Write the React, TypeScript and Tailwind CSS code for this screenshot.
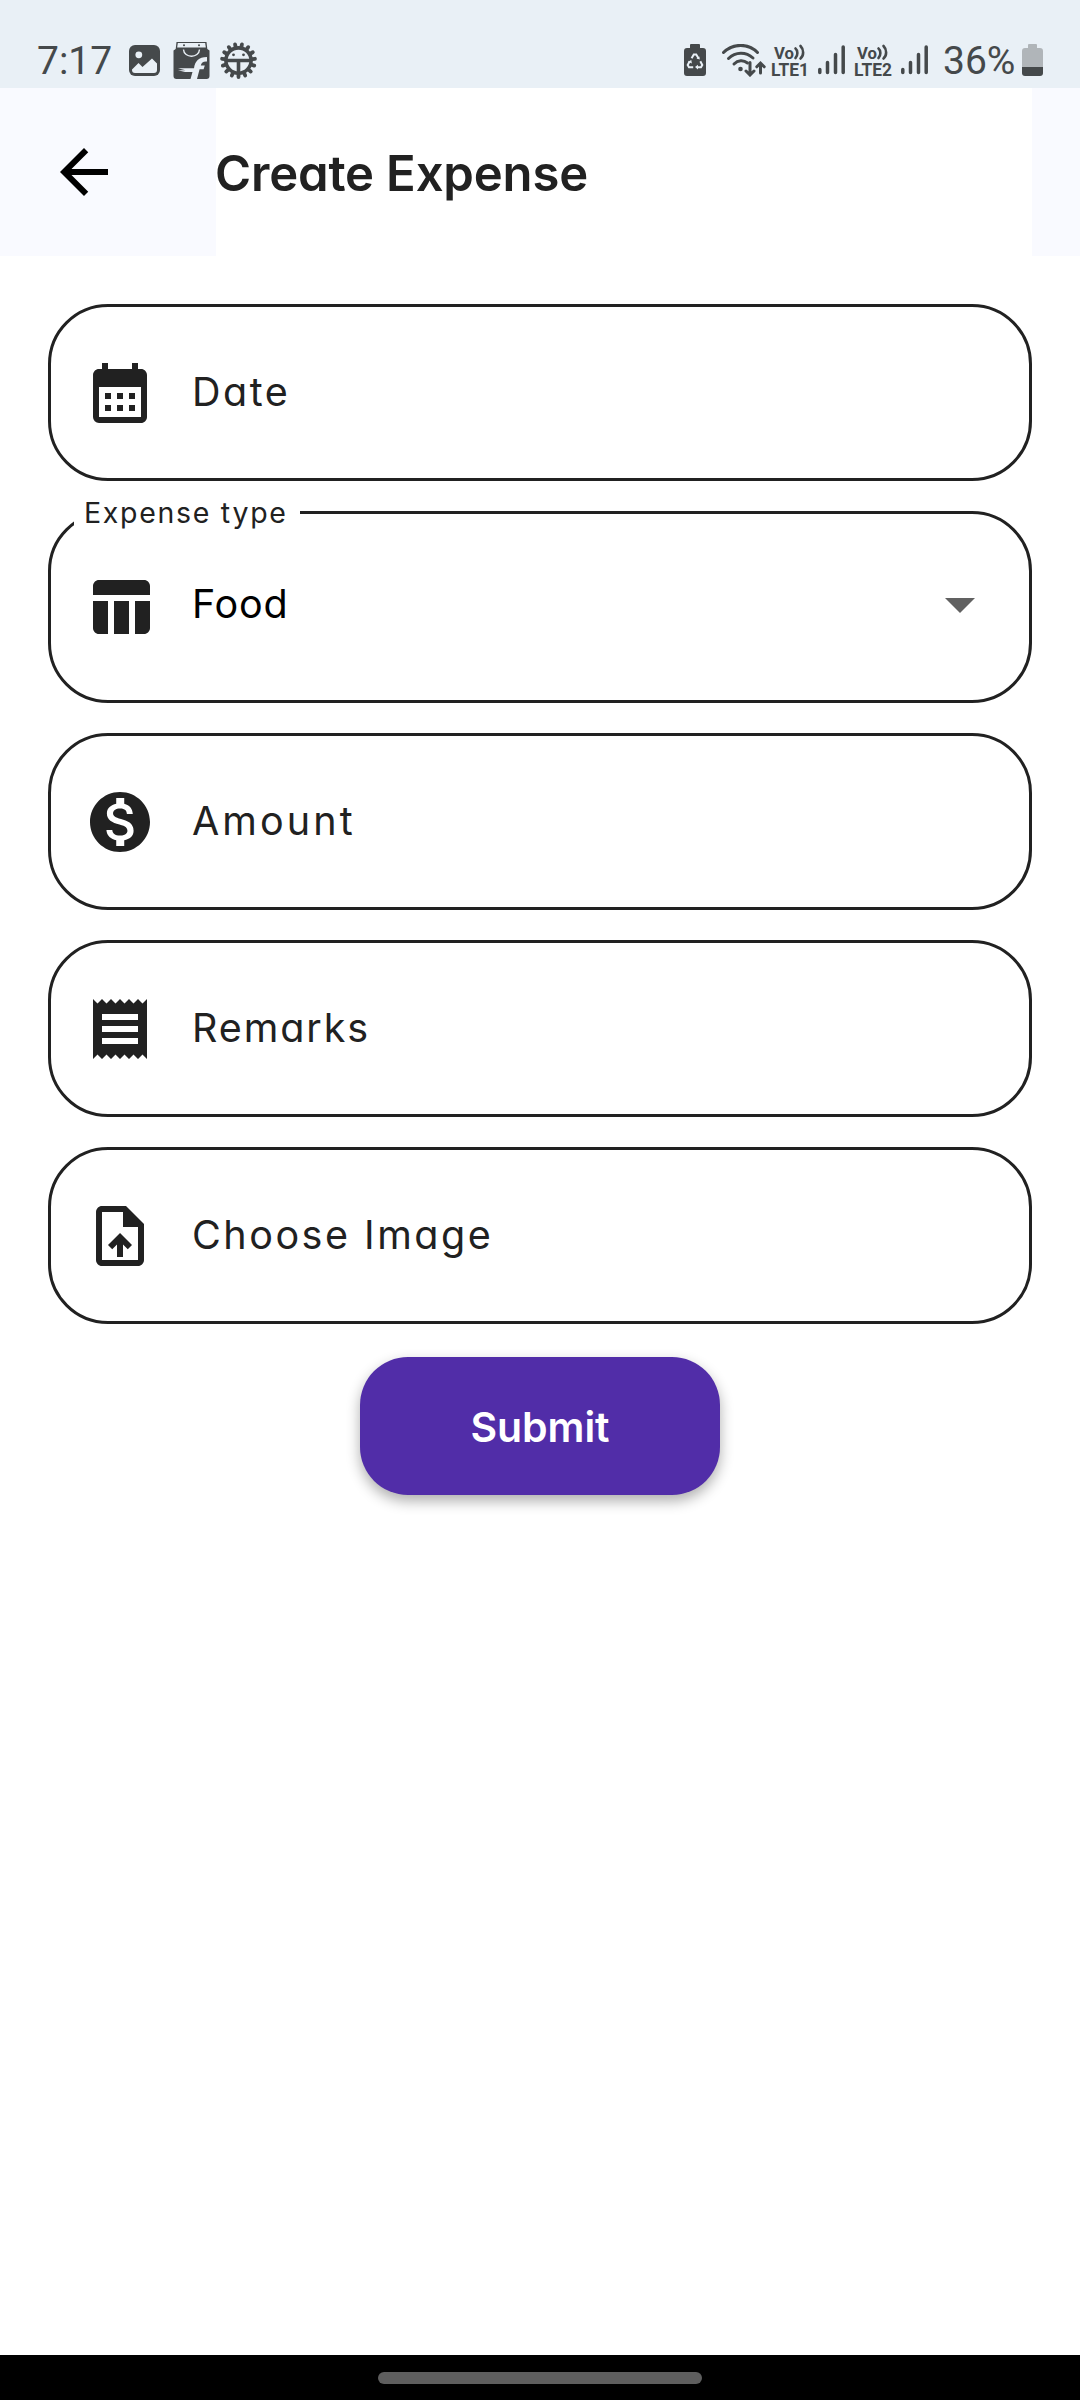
import React from 'react'
import {
    MdArrowBack,
    MdArrowDropDown,
    MdCalendarMonth,
    MdMonetizationOn,
    MdReceipt,
    MdTableChart,
    MdUploadFile,
} from 'react-icons/md'

function ImageIcon() {
    return (
        <svg className="ml-[19px]" width="31" height="31" viewBox="0 0 31 31">
            <rect width="31" height="31" rx="6" fill="#45494b"/>
            <circle cx="9.8" cy="9.8" r="3.4" fill="#e9f0f6"/>
            <path d="M3 24.5L9.5 18l4 4L23 13.5l5 5V25a3 3 0 0 1-3 3H6a3 3 0 0 1-3-3z" fill="#e9f0f6"/>
        </svg>
    )
}

function ShopIcon() {
    return (
        <svg className="ml-[13px]" width="37" height="37" viewBox="0 0 37 37">
            <path d="M3.5 0h30l.8 7 2.2 1.5V34a3 3 0 0 1-3 3h-30a3 3 0 0 1-3-3V8.5L2.7 7z" fill="#45494b"/>
            <path d="M4.8 1h27.4l.6 4.5H4.2z" fill="#e9f0f6"/>
            <circle cx="11" cy="3.2" r="1" fill="#45494b"/>
            <circle cx="26" cy="3.2" r="1" fill="#45494b"/>
            <path d="M10.5 7.5c.5 9 15.5 9 16 0" fill="none" stroke="#e9f0f6" strokeWidth="1.4"/>
            <path
                d="M17.5 37l2-7H12l-7-1.8h7.5L5 26.3h16c1-7 4.5-11.3 13-11.3v4.5c-4-.3-5.5 1.3-6.2 4h4l-1.2 3.8h-4L24 37z"
                fill="#e9f0f6"/>
        </svg>
    )
}

const teeth = [0, 24, 48, 72, 96, 120, 144, 168, 192, 216, 240, 264, 288, 312, 336]

function GearIcon() {
    return (
        <svg className="ml-[10px]" width="37" height="37" viewBox="0 0 37 37">
            {teeth.map((deg) => (
                <path key={deg} d="M18.5 2v5" stroke="#45494b" strokeWidth="3.8" strokeLinecap="round"
                      transform={`rotate(${deg + 12} 18.5 18.5)`}/>
            ))}
            <circle cx="18.5" cy="18.5" r="12.6" fill="#e9f0f6" stroke="#45494b" strokeWidth="3.6"/>
            <path d="M6 18.5h25M18.5 18.5v13" stroke="#45494b" strokeWidth="3.6"/>
            <circle cx="13.5" cy="12.8" r="1.4" fill="#45494b"/>
            <circle cx="23.5" cy="12.8" r="1.4" fill="#45494b"/>
        </svg>
    )
}

function RecycleBattery() {
    return (
        <svg width="22" height="32" viewBox="0 0 22 32">
            <path d="M7 0h8a1 1 0 0 1 1 1v3h3a3 3 0 0 1 3 3v22a3 3 0 0 1-3 3H3a3 3 0 0 1-3-3V7a3 3 0 0 1 3-3h3V1a1 1 0 0 1 1-1z"
                  fill="#45494b"/>
            <g fill="none" stroke="#e9f0f6" strokeWidth="2">
                <path d="M7.6 14.2l2.2-3.7h2.4l2.3 3.7"/>
                <path d="M16.3 17.2l2 3.8-1.3 2.2h-4.2"/>
                <path d="M9.2 23.2H5L3.7 21l2-3.8"/>
            </g>
            <path d="M15.8 15.5l-3.3-1 2.8-2zM14 20.8v4.6l-3-2.3zM4 17.8l3.3-1.8.6 3.4z" fill="#e9f0f6"/>
        </svg>
    )
}

function WifiIcon() {
    return (
        <svg className="ml-[16px]" width="44" height="33" viewBox="0 0 44 33">
            <g fill="none" stroke="#45494b" strokeWidth="3" strokeLinecap="round">
                <path d="M1.5 8.5C11-1 26.5-1 35.5 8.5"/>
                <path d="M6.5 14.5c7-7 17.5-7 24.500-.5"/>
                <path d="M12 20c4-4 9.5-4.2 13.5-1"/>
                <path d="M28 18.5v12M24 27l4 4 4-4M38.5 29v-9.5M34.8 22.8l3.7-3.7 3.7 3.7"/>
            </g>
            <circle cx="18.5" cy="25" r="2.3" fill="#45494b"/>
        </svg>
    )
}

function VolteIcon({sim}: { sim: string }) {
    return (
        <svg width="41" height="41" viewBox="0 -4 41 41" fill="#45494b" className="font-['Roboto',sans-serif] font-bold">
            <text x="4" y="14.5" fontSize="17" textLength="20" lengthAdjust="spacingAndGlyphs">Vo</text>
            <path d="M25.5 4.5c2.5 2 2.5 7 0 9.5M30.5 2c3.5 3.5 3.5 9.5 0 12.5" fill="none" stroke="#45494b"
                  strokeWidth="2.6" strokeLinecap="round"/>
            <text x="1" y="31.5" fontSize="18" textLength="38" lengthAdjust="spacingAndGlyphs">{`LTE${sim}`}</text>
        </svg>
    )
}

function SignalIcon() {
    return (
        <svg width="27" height="30" viewBox="0 0 27 30">
            <path d="M1.8 24.5v3M9.5 17.5v10M17.5 9.5v18M25.2 2v25.5" stroke="#45494b" strokeWidth="3.5"
                  strokeLinecap="round"/>
        </svg>
    )
}

function BatteryIcon() {
    return (
        <svg className="ml-auto" width="21" height="32" viewBox="0 0 21 32">
            <path d="M7 0h7a1 1 0 0 1 1 1v3h3a3 3 0 0 1 3 3v16H0V7a3 3 0 0 1 3-3h3V1a1 1 0 0 1 1-1z" fill="#b0b5b9"/>
            <path d="M0 23h21v6a3 3 0 0 1-3 3H3a3 3 0 0 1-3-3z" fill="#45494b"/>
        </svg>
    )
}

function StatusBar() {
    return (
        <div className="flex h-[88px] justify-between bg-[#e9f0f6] pt-[32px] pr-[37px] pl-[37px] text-[#45494b] font-['Roboto',sans-serif]">
            <div className="flex h-[56px] items-center">
                <span className="w-[73px] pt-[2px] text-[39px] leading-[56px] whitespace-nowrap">7:17</span>
                <ImageIcon/>
                <ShopIcon/>
                <GearIcon/>
            </div>
            <div className="flex h-[56px] w-[359px] items-center">
                <RecycleBattery/>
                <WifiIcon/>
                <span className="ml-[4px]"><VolteIcon sim="1"/></span>
                <span className="ml-[7px]"><SignalIcon/></span>
                <span className="ml-[8px]"><VolteIcon sim="2"/></span>
                <span className="ml-[7px]"><SignalIcon/></span>
                <span className="ml-[15px] w-[73px] pt-[2px] text-[39px] leading-[56px] whitespace-nowrap">36%</span>
                <BatteryIcon/>
            </div>
        </div>
    )
}

type FieldProps = {
    icon: React.ReactNode
    text: string
    textClass: string
}

function Field({icon, text, textClass}: FieldProps) {
    return (
        <div className="flex h-[177px] items-center rounded-[60px] border-3 border-[#212121] pl-[33px] text-[#212121]">
            {icon}
            <span className={`ml-[36px] pb-px text-[39.5px] leading-[56px] whitespace-nowrap ${textClass}`}>{text}</span>
        </div>
    )
}

export default function App(): React.ReactElement {
    return (
        <div
            className="flex h-[2400px] w-[1080px] flex-col bg-white font-['Inter','Open_Sans',sans-serif] [font-feature-settings:'cv11']">
            <StatusBar/>
            <header className="flex h-[168px] bg-[#f9faff]">
                <div className="flex w-[216px] items-center pl-[48px]">
                    <MdArrowBack size={72} color="#000"/>
                </div>
                <div className="flex w-[816px] items-center bg-white pt-[4px]">
                    <h1 className="-ml-px text-[49px] font-semibold tracking-[-0.15px] whitespace-nowrap text-[#212121]">Create Expense</h1>
                </div>
            </header>

            <main className="flex flex-1 flex-col gap-[30px] px-[48px] pt-[48px]">
                <Field icon={<MdCalendarMonth size={72}/>} text="Date" textClass="tracking-[2.5px]"/>

                <div
                    className="relative flex h-[192px] items-center rounded-[60px] border-3 border-[#212121] pr-[33px] pl-[33px]">
                    {/* floating label sits over the top border */}
                    <span
                        className="absolute -top-[19px] left-[23px] w-[226px] bg-white pl-[10px] text-[28.5px] leading-[36px] tracking-[1.7px] whitespace-nowrap text-[#212121]">
                        Expense type
                    </span>
                    <MdTableChart size={72} color="#212121"/>
                    <span className="ml-[36px] pb-[6px] text-[39.5px] leading-[56px] tracking-[0.8px] text-black">Food</span>
                    <MdArrowDropDown className="mb-[6px] ml-auto" size={72} color="#616161"/>
                </div>

                <Field icon={<MdMonetizationOn size={72}/>} text="Amount" textClass="tracking-[3.1px]"/>
                <Field icon={<MdReceipt size={72}/>} text="Remarks" textClass="tracking-[1.9px]"/>
                <Field icon={<MdUploadFile size={72}/>} text="Choose Image" textClass="tracking-[2.5px]"/>

                <button
                    className="mt-[3px] h-[138px] w-[360px] self-center rounded-[48px] bg-[#512da8] pt-[4px] text-[41px] font-semibold tracking-[-0.1px] text-white shadow-[0_6px_14px_rgba(0,0,0,0.32)]">
                    Submit
                </button>
            </main>

            <footer className="flex h-[45px] justify-center bg-black pt-[17px]">
                <div className="h-[12px] w-[324px] rounded-full bg-[#5e5e5e]"/>
            </footer>
        </div>
    )
}
